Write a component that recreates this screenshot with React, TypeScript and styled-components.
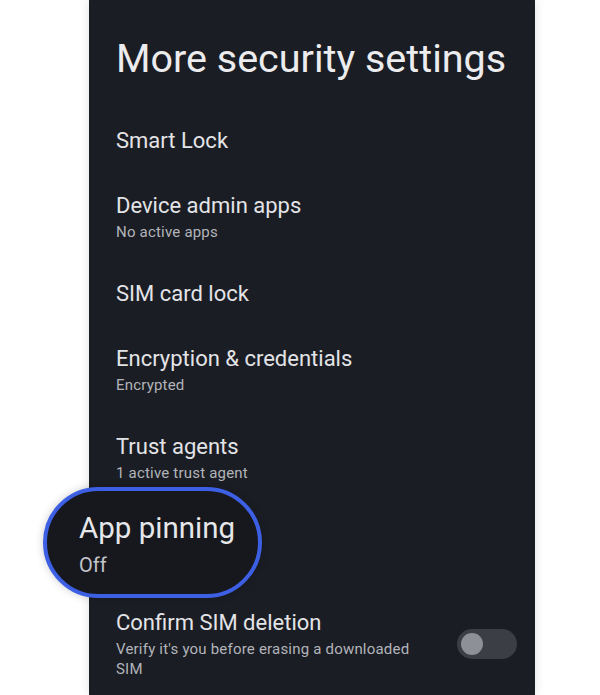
import styled, { createGlobalStyle } from 'styled-components';

const GlobalStyle = createGlobalStyle`
  html, body {
    margin: 0;
    padding: 0;
    background: #ffffff;
  }
  body {
    font-family: Roboto, "Noto Sans", "Liberation Sans", sans-serif;
    -webkit-font-smoothing: antialiased;
  }
`;

interface Setting {
  title: string;
  summary?: string;
}

const settings: Setting[] = [
  { title: 'Smart Lock' },
  { title: 'Device admin apps', summary: 'No active apps' },
  { title: 'SIM card lock' },
  { title: 'Encryption & credentials', summary: 'Encrypted' },
  { title: 'Trust agents', summary: '1 active trust agent' },
];

const App = () => {
  return (
    <>
      <GlobalStyle />
      <Stage>
        <Screen>
          <Heading>More security settings</Heading>
          <List>
            {settings.map((item) => (
              <Row key={item.title}>
                <TextCol>
                  <ItemTitle>{item.title}</ItemTitle>
                  {item.summary && <Summary>{item.summary}</Summary>}
                </TextCol>
              </Row>
            ))}
            {/* the highlighted row, drawn bigger and ringed */}
            <Callout>
              <CalloutTitle>App pinning</CalloutTitle>
              <CalloutSummary>Off</CalloutSummary>
            </Callout>
            <Row>
              <TextCol narrow>
                <ItemTitle>Confirm SIM deletion</ItemTitle>
                <Summary>Verify it's you before erasing a downloaded SIM</Summary>
              </TextCol>
              <Toggle>
                <Thumb />
              </Toggle>
            </Row>
          </List>
        </Screen>
      </Stage>
    </>
  );
};

export default App;

const Stage = styled.div`
  width: 600px;
  height: 695px;
  overflow: hidden;
`;

const Screen = styled.div`
  margin-left: 89px;
  width: 446px;
  height: 695px;
  box-sizing: border-box;
  padding: 36px 18px 0 27px;
  background: #1b1d24;
  box-shadow: 0 0 10px rgba(0, 0, 0, 0.12);
`;

const Heading = styled.div`
  color: #ececee;
  font-size: 39.5px;
  line-height: 46px;
  font-weight: 400;
  white-space: nowrap;
`;

const List = styled.div`
  display: flex;
  flex-direction: column;
  margin-top: 26px;
`;

const Row = styled.div`
  display: flex;
  align-items: center;
  justify-content: space-between;
  padding: 19.5px 0;
`;

const TextCol = styled.div<{ narrow?: boolean }>`
  display: flex;
  flex-direction: column;
  max-width: ${(p) => (p.narrow ? '310px' : 'none')};
`;

const ItemTitle = styled.div`
  color: #e3e4e7;
  font-size: 22px;
  line-height: 26px;
`;

const Summary = styled.div`
  margin-top: 3px;
  color: #b2b4ba;
  font-size: 15px;
  line-height: 20px;
  letter-spacing: 0.2px;
`;

const Toggle = styled.div`
  display: flex;
  align-items: center;
  flex-shrink: 0;
  width: 60px;
  height: 30px;
  padding: 0 4px;
  box-sizing: border-box;
  border-radius: 15px;
  background: #3c3e46;
`;

const Thumb = styled.div`
  width: 22px;
  height: 22px;
  border-radius: 50%;
  background: #8e9098;
`;

const Callout = styled.div`
  width: 219px;
  height: 111px;
  margin: -15px 0 -8px -73px;
  box-sizing: border-box;
  padding: 20px 0 0 32px;
  border: 4px solid #3d5fe3;
  border-radius: 56px;
  background: #17181e;
  box-shadow: 0 0 8px rgba(0, 0, 0, 0.2);
`;

const CalloutTitle = styled.div`
  color: #e6e7ea;
  font-size: 29.5px;
  line-height: 34px;
  white-space: nowrap;
`;

const CalloutSummary = styled.div`
  margin-top: 8px;
  color: #c4c5ca;
  font-size: 20px;
  line-height: 24px;
`;
